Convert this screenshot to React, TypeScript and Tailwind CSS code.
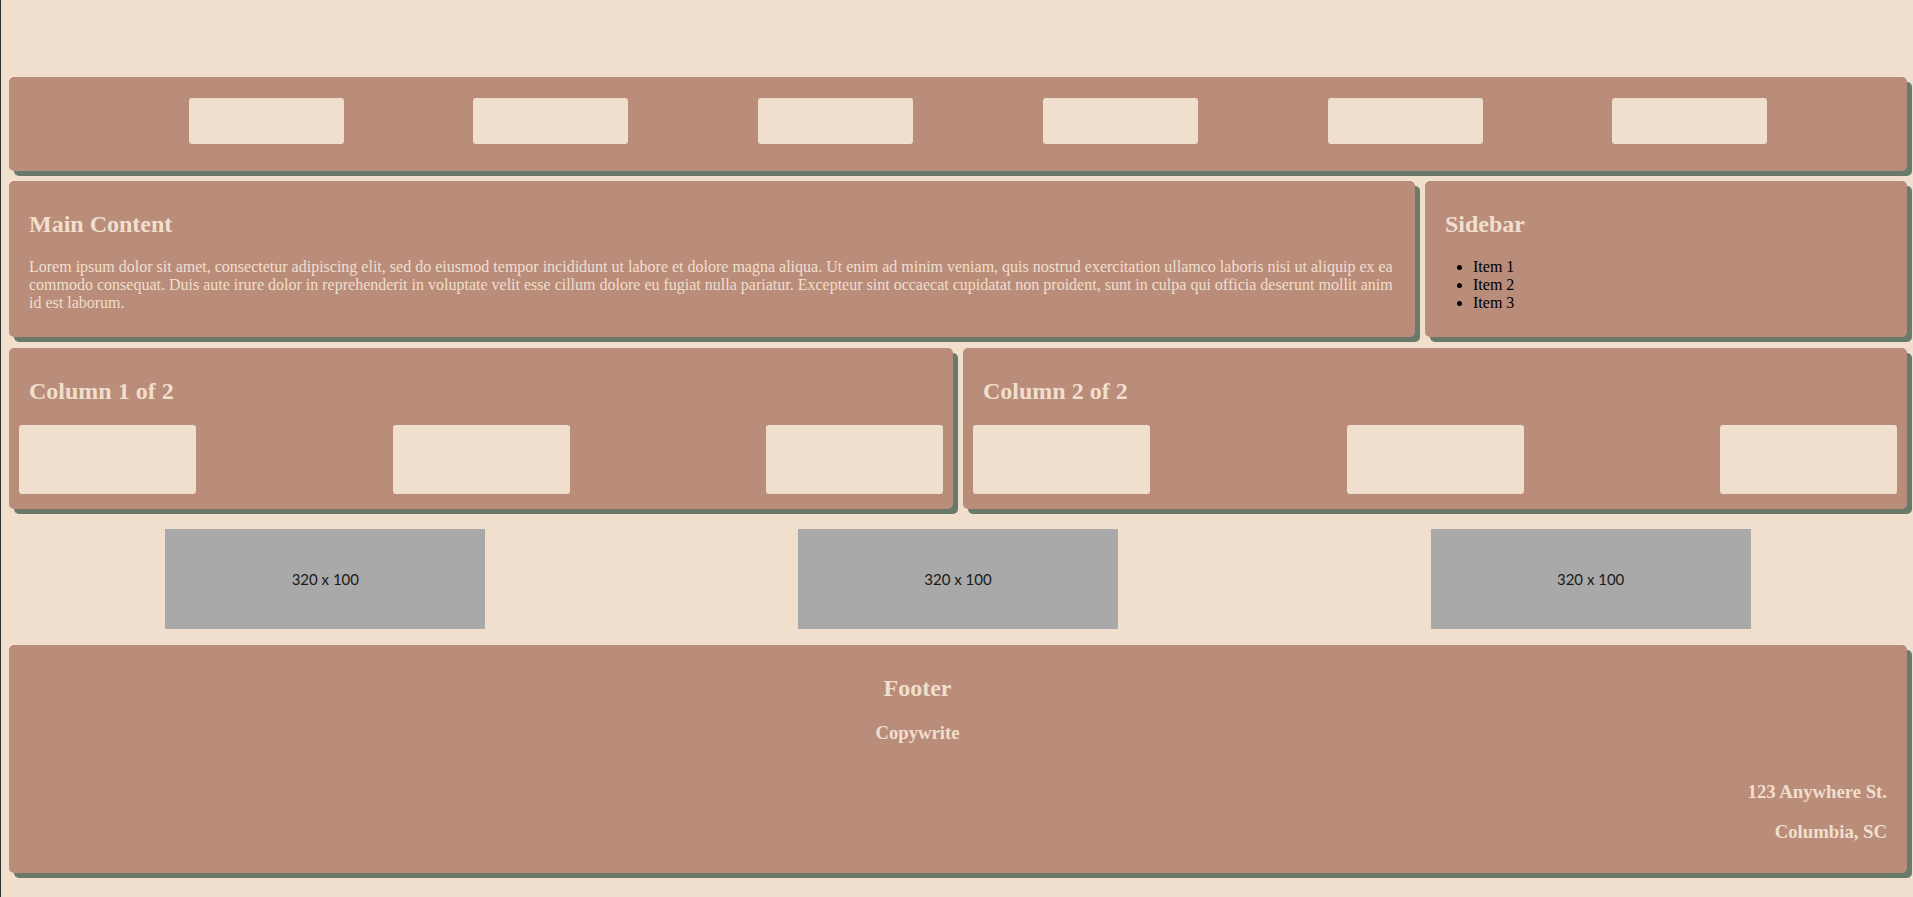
export default function App() {
  const navItems = [1, 2, 3, 4, 5, 6];
  const boxes = [1, 2, 3];
  const images = [1, 2, 3];

  const card = "bg-[#ba8c7a] rounded-[5px] shadow-[5px_5px_0_#697a6b]";
  const heading = "text-[24px] leading-[28px] font-bold text-[#f0dfcd]";

  return (
    <div className="min-h-screen w-full bg-[#f0dfcd] border-l border-[#2e2e2e] pl-[8px] pr-[6px] pt-[77px] pb-[25px] font-['Liberation_Serif',_'Times_New_Roman',_serif]">
      {/* NAV */}
      <nav className={`${card} px-[10px] pt-[21px] pb-[27px]`}>
        <ul className="flex justify-evenly pl-[40px]">
          {navItems.map((n) => (
            <li key={n} className="w-[155px] h-[46px] rounded-[3px] bg-[#f0dfcd]" />
          ))}
        </ul>
      </nav>

      {/* MAIN + SIDEBAR */}
      <div className="grid grid-cols-[1406px_1fr] gap-[10px] mt-[10px]">
        <main className={`${card} px-[20px] pt-[29px] pb-[25px] min-h-[156px]`}>
          <h2 className={heading}>Main Content</h2>
          <p className="mt-[20px] text-[16px] leading-[18px] text-[#f0dfcd]">
            Lorem ipsum dolor sit amet, consectetur adipiscing elit, sed do eiusmod tempor incididunt ut labore et dolore
            magna aliqua. Ut enim ad minim veniam, quis nostrud exercitation ullamco laboris nisi ut aliquip ex ea commodo
            consequat. Duis aute irure dolor in reprehenderit in voluptate velit esse cillum dolore eu fugiat nulla
            pariatur. Excepteur sint occaecat cupidatat non proident, sunt in culpa qui officia deserunt mollit anim id est
            laborum.
          </p>
        </main>

        <aside className={`${card} px-[20px] pt-[29px] pb-[25px]`}>
          <h2 className={heading}>Sidebar</h2>
          <ul className="mt-[20px] list-disc pl-[28px] text-[16px] leading-[18px] text-black">
            <li>Item 1</li>
            <li>Item 2</li>
            <li>Item 3</li>
          </ul>
        </aside>
      </div>

      {/* COLUMNS */}
      <div className="grid grid-cols-2 gap-[10px] mt-[11px]">
        {["Column 1 of 2", "Column 2 of 2"].map((title) => (
          <section key={title} className={`${card} px-[10px] pt-[29px] pb-[15px]`}>
            <h2 className={`${heading} pl-[10px]`}>{title}</h2>
            <div className="flex justify-between mt-[20px]">
              {boxes.map((b) => (
                <div key={b} className="w-[177px] h-[69px] rounded-[3px] bg-[#f0dfcd]" />
              ))}
            </div>
          </section>
        ))}
      </div>

      {/* IMAGES */}
      <div className="flex justify-around mt-[20px]">
        {images.map((i) => (
          <div
            key={i}
            className="w-[320px] h-[100px] bg-[#a9a9a9] flex items-center justify-center text-[15px] text-[#1a1a1a] font-['Lato',_'Open_Sans',_sans-serif]"
          >
            320 x 100
          </div>
        ))}
      </div>

      {/* FOOTER */}
      <footer className={`${card} mt-[16px] px-[20px] pt-[29px] pb-[30px] text-[#f0dfcd]`}>
        <div className="text-center mr-[81px]">
          <h2 className={heading}>Footer</h2>
          <h3 className="mt-[20px] text-[18.72px] leading-[21.5px] font-bold">Copywrite</h3>
        </div>
        <div className="text-right">
          <h3 className="mt-[37px] text-[18.72px] leading-[21.5px] font-bold">123 Anywhere St.</h3>
          <h3 className="mt-[19px] text-[18.72px] leading-[21.5px] font-bold">Columbia, SC</h3>
        </div>
      </footer>
    </div>
  );
}
